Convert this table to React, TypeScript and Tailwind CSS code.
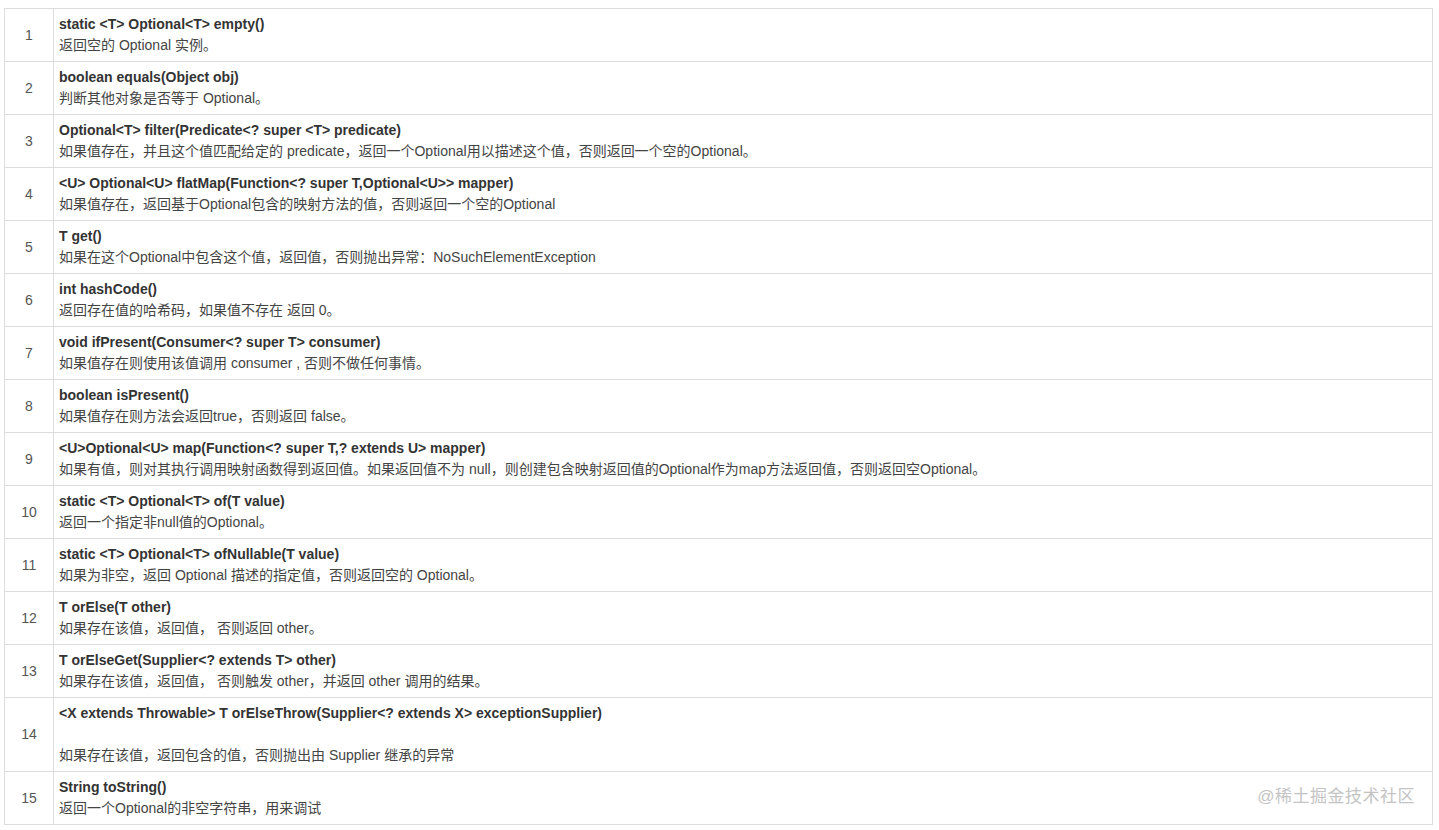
import React from 'react';

interface MethodRow {
  sig: string;
  desc: string;
  gap?: boolean;
}

const ROWS: MethodRow[] = [
  { sig: 'static <T> Optional<T> empty()', desc: '返回空的 Optional 实例。' },
  { sig: 'boolean equals(Object obj)', desc: '判断其他对象是否等于 Optional。' },
  { sig: 'Optional<T> filter(Predicate<? super <T> predicate)', desc: '如果值存在，并且这个值匹配给定的 predicate，返回一个Optional用以描述这个值，否则返回一个空的Optional。' },
  { sig: '<U> Optional<U> flatMap(Function<? super T,Optional<U>> mapper)', desc: '如果值存在，返回基于Optional包含的映射方法的值，否则返回一个空的Optional' },
  { sig: 'T get()', desc: '如果在这个Optional中包含这个值，返回值，否则抛出异常：NoSuchElementException' },
  { sig: 'int hashCode()', desc: '返回存在值的哈希码，如果值不存在 返回 0。' },
  { sig: 'void ifPresent(Consumer<? super T> consumer)', desc: '如果值存在则使用该值调用 consumer , 否则不做任何事情。' },
  { sig: 'boolean isPresent()', desc: '如果值存在则方法会返回true，否则返回 false。' },
  { sig: '<U>Optional<U> map(Function<? super T,? extends U> mapper)', desc: '如果有值，则对其执行调用映射函数得到返回值。如果返回值不为 null，则创建包含映射返回值的Optional作为map方法返回值，否则返回空Optional。' },
  { sig: 'static <T> Optional<T> of(T value)', desc: '返回一个指定非null值的Optional。' },
  { sig: 'static <T> Optional<T> ofNullable(T value)', desc: '如果为非空，返回 Optional 描述的指定值，否则返回空的 Optional。' },
  { sig: 'T orElse(T other)', desc: '如果存在该值，返回值， 否则返回 other。' },
  { sig: 'T orElseGet(Supplier<? extends T> other)', desc: '如果存在该值，返回值， 否则触发 other，并返回 other 调用的结果。' },
  { sig: '<X extends Throwable> T orElseThrow(Supplier<? extends X> exceptionSupplier)', desc: '如果存在该值，返回包含的值，否则抛出由 Supplier 继承的异常', gap: true },
  { sig: 'String toString()', desc: '返回一个Optional的非空字符串，用来调试' },
];

const App: React.FC = () => {
  return (
    <div
      className="w-[1439px] h-[830px] bg-white pt-[8px] pl-[4px] relative"
      style={{ fontFamily: '"Liberation Sans", Arial, "Noto Sans CJK SC", sans-serif' }}
    >
      <table className="w-[1429px] border-collapse text-[14px] leading-[21px]">
        <tbody>
          {ROWS.map((row, i) => (
            <tr key={i} className="border border-[#dcdcdc]">
              <td className="w-[49px] border border-[#dcdcdc] text-center text-[#555]">{i + 1}</td>
              <td className="border border-[#dcdcdc] pl-[5px] pr-2 py-[5px]">
                <div className="font-bold text-[#333]">{row.sig}</div>
                {row.gap && <div className="h-[21px]" />}
                <div className="text-[#444]">{row.desc}</div>
              </td>
            </tr>
          ))}
        </tbody>
      </table>

      {/* watermark */}
      <div className="absolute right-[24px] top-[786px] text-[17px] leading-[22px] text-[#c4c4c4] tracking-[0.5px]">
        @稀土掘金技术社区
      </div>
    </div>
  );
};

export default App;
